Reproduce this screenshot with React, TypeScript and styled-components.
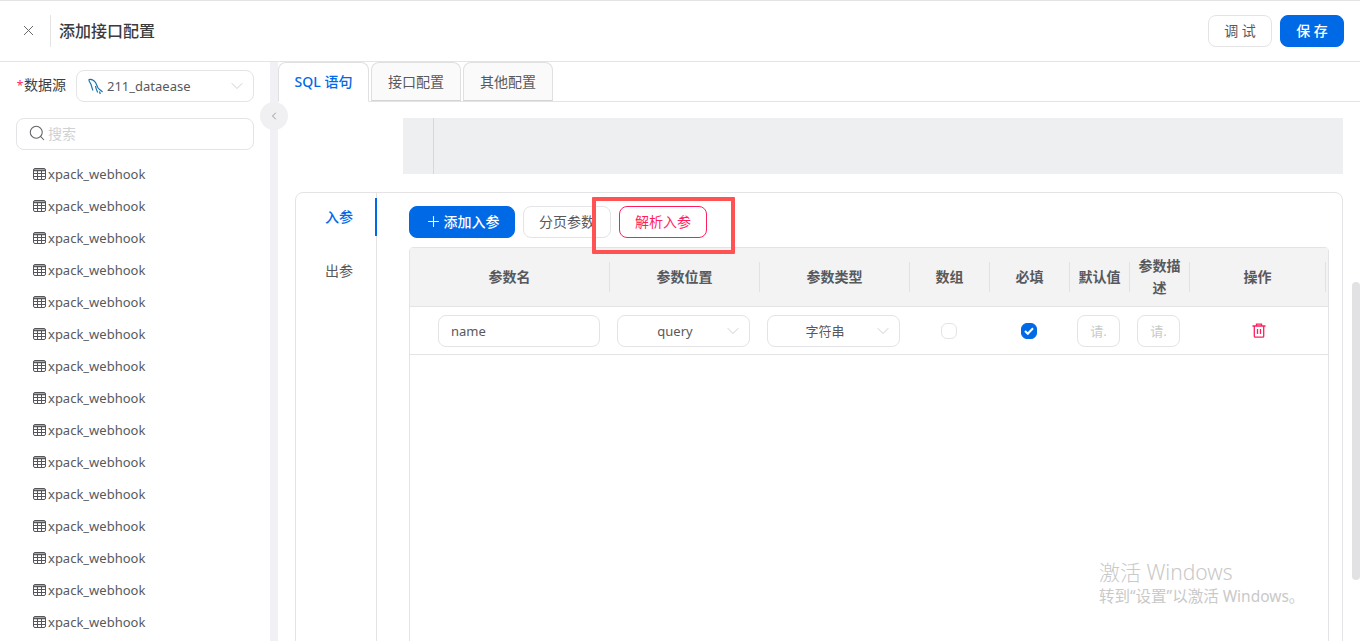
import React from "react";
import styled, { createGlobalStyle } from "styled-components";
import { ChevronDown, ChevronLeft, Plus, Search, X } from "lucide-react";

const blue = "#0069e6";
const pink = "#ff1f5f";
const line = "#e4e4e6";
const textColor = "#58595c";

const tables = Array.from({ length: 15 }, (_, i) => ({ id: i, name: "xpack_webhook" }));

const columns = ["参数名", "参数位置", "参数类型", "数组", "必填", "默认值", "参数描述", "操作"];

const GlobalStyle = createGlobalStyle`
  html, body {
    margin: 0;
    padding: 0;
    background: #fff;
    overflow: hidden;
  }
  * {
    box-sizing: border-box;
  }
  body {
    font-family: "Noto Sans", "Noto Sans CJK SC", sans-serif;
    font-size: 14px;
    color: ${textColor};
  }
`;

function TableIcon() {
  return (
    <svg width="14" height="14" viewBox="0 0 14 14" fill="none" stroke="#55565a">
      <rect x="0.5" y="1.500" width="12" height="11" rx="1.500" />
      <path d="M.5 3h12M.5 3.600h12" strokeWidth="1.200" />
      <path d="M.5 6.500h12M.5 9.500h12M4.500 4v8.500M8.500 4v8.500" />
    </svg>
  );
}

function DolphinIcon() {
  return (
    <svg width="16" height="17" viewBox="0 0 16 17" fill="none" stroke="#1a72ad" strokeWidth="1.200">
      <path d="M.8 1.500c3-.8 5 .4 6.700 3 1 1.800 1.600 4 2.600 5.500 1 1.300 2.600 2.400 4.400 4" />
      <path d="M.8 1.500c.3 2 1.400 3.300 2.200 5 .7 1.700.8 3.500 2 6" />
      <path d="M7.500 8c.3 2 .9 3.800 2.200 6.500" />
      <path d="M11.500 13.500l.8 2.500" />
    </svg>
  );
}

function TrashIcon() {
  return (
    <svg width="14" height="15" viewBox="0 0 14 15" fill="none" stroke={pink} strokeWidth="1.300">
      <path d="M.5 3h13M4.500 3V1.200h5V3" />
      <path d="M2.300 3v10.300c0 .5.400.9.900.9h7.600c.5 0 .9-.4.900-.9V3" />
      <path d="M5.500 6v5M8.500 6v5" />
    </svg>
  );
}

export default function App() {
  return (
    <Page>
      <GlobalStyle />
      <Header>
        <CloseButton>
          <X size={17} strokeWidth={1.4} />
        </CloseButton>
        <Title>添加接口配置</Title>
        <HeaderActions>
          <Button>调 试</Button>
          <Button $primary>保 存</Button>
        </HeaderActions>
      </Header>

      <Body>
        <Sidebar>
          <SourceRow>
            <SourceLabel>
              <Required>*</Required>数据源
            </SourceLabel>
            <SourceSelect>
              <DolphinIcon />
              <span>211_dataease</span>
              <SourceArrow size={20} strokeWidth={1} />
            </SourceSelect>
          </SourceRow>
          <SearchBox>
            <Search size={18} strokeWidth={1.4} color="#606266" />
            <span>搜索</span>
          </SearchBox>
          <TableList>
            {tables.map((t) => (
              <TableRow key={t.id}>
                <TableIcon />
                {t.name}
              </TableRow>
            ))}
          </TableList>
        </Sidebar>

        <Splitter>
          <CollapseButton>
            <ChevronLeft size={12} strokeWidth={1.5} />
          </CollapseButton>
        </Splitter>

        <Main>
          <TabBar>
            <Tab $active>SQL 语句</Tab>
            <Tab>接口配置</Tab>
            <Tab>其他配置</Tab>
          </TabBar>

          <Editor>
            <Gutter />
          </Editor>

          <ParamCard>
            <SideTabs>
              <SideTab $active>入参</SideTab>
              <SideTab>出参</SideTab>
            </SideTabs>
            <ParamContent>
              <Toolbar>
                <ToolButton $variant="primary">
                  <Plus size={17} strokeWidth={1.5} />
                  添加入参
                </ToolButton>
                <ToolButton>分页参数</ToolButton>
                <ToolButton $variant="danger">解析入参</ToolButton>
              </Toolbar>
              <ParamTable>
                <HeadRow>
                  {columns.map((c) => (
                    <HeadCell key={c}>
                      <span>{c}</span>
                    </HeadCell>
                  ))}
                </HeadRow>
                <DataRow>
                  <Cell>
                    <NameInput>name</NameInput>
                  </Cell>
                  <Cell>
                    <Select>
                      <span>query</span>
                      <FieldArrow size={20} strokeWidth={1} />
                    </Select>
                  </Cell>
                  <Cell>
                    <Select>
                      <span>字符串</span>
                      <FieldArrow size={20} strokeWidth={1} />
                    </Select>
                  </Cell>
                  <CheckCell>
                    <Checkbox />
                  </CheckCell>
                  <CheckCell>
                    <Checkbox $checked>
                      <svg width="10" height="8" viewBox="0 0 10 8" fill="none" stroke="#fff" strokeWidth="2">
                        <path d="M1 4l2.800 2.800L9 1.200" />
                      </svg>
                    </Checkbox>
                  </CheckCell>
                  <Cell>
                    <SmallInput>请.</SmallInput>
                  </Cell>
                  <Cell>
                    <SmallInput>请.</SmallInput>
                  </Cell>
                  <ActionCell>
                    <TrashIcon />
                  </ActionCell>
                </DataRow>
              </ParamTable>
            </ParamContent>
          </ParamCard>
        </Main>
      </Body>

      <Annotation />
      <ScrollThumb />
      <Watermark>
        <strong>激活 Windows</strong>
        <span>转到“设置”以激活 Windows。</span>
      </Watermark>
    </Page>
  );
}

const Page = styled.div`
  position: relative;
  display: flex;
  flex-direction: column;
  height: 641px;
  overflow: hidden;
  border-top: 1px solid ${line};
`;

const Header = styled.header`
  display: flex;
  align-items: center;
  flex-shrink: 0;
  height: 61px;
  padding: 0 16px 1px 0;
  border-bottom: 1px solid ${line};
`;

const CloseButton = styled.div`
  display: flex;
  align-items: center;
  justify-content: center;
  width: 51px;
  height: 32px;
  padding-left: 6px;
  border-right: 1px solid ${line};
  color: #66676a;
`;

const Title = styled.div`
  margin-left: 8px;
  padding-bottom: 2px;
  color: #3a3b3e;
  font-size: 16px;
  font-weight: 500;
`;

const HeaderActions = styled.div`
  display: flex;
  gap: 8px;
  margin-left: auto;
`;

const Button = styled.button<{ $primary?: boolean }>`
  width: 64px;
  height: 32px;
  padding: 0 0 1px;
  border: 1px solid ${(p) => (p.$primary ? blue : line)};
  border-radius: 8px;
  background: ${(p) => (p.$primary ? blue : "#fff")};
  color: ${(p) => (p.$primary ? "#fff" : textColor)};
  font-family: inherit;
  font-size: 14px;
  font-weight: ${(p) => (p.$primary ? 500 : 400)};
`;

const Body = styled.div`
  display: flex;
  flex: 1;
  min-height: 0;
`;

const Sidebar = styled.aside`
  flex-shrink: 0;
  width: 270px;
  padding: 8px 16px 0;
`;

const SourceRow = styled.div`
  display: flex;
  align-items: center;
  height: 32px;
`;

const SourceLabel = styled.div`
  width: 60px;
  padding-bottom: 4px;
  color: #3f4043;
  white-space: nowrap;
`;

const Required = styled.span`
  display: inline-block;
  width: 8px;
  color: ${pink};
  font-size: 12px;
  text-align: center;
`;

const SourceSelect = styled.div`
  display: flex;
  align-items: center;
  gap: 3px;
  width: 178px;
  height: 32px;
  padding: 0 11px;
  border: 1px solid ${line};
  border-radius: 8px;
  color: ${textColor};
  font-size: 13px;
`;

const SourceArrow = styled(ChevronDown)`
  margin-left: auto;
  margin-right: -5px;
  color: #c4c5c8;
`;

const FieldArrow = styled(ChevronDown)`
  position: absolute;
  right: 6px;
  color: #c4c5c8;
`;

const SearchBox = styled.div`
  display: flex;
  align-items: center;
  gap: 2px;
  height: 32px;
  margin-top: 16px;
  padding: 0 0 2px 11px;
  border: 1px solid ${line};
  border-radius: 8px;
  color: #d0d1d3;
`;

const TableList = styled.div`
  margin-top: 8px;
`;

const TableRow = styled.div`
  display: flex;
  align-items: center;
  gap: 1px;
  height: 32px;
  padding: 0 0 1px 17px;
  color: ${textColor};
  font-size: 13px;
`;

const Splitter = styled.div`
  position: relative;
  flex-shrink: 0;
  width: 8px;
  background: #f0f0f5;
`;

const CollapseButton = styled.div`
  position: absolute;
  top: 40px;
  left: -10px;
  display: flex;
  align-items: center;
  justify-content: center;
  width: 28px;
  height: 28px;
  border-radius: 50%;
  background: #f0f0f2;
  color: #7a7b7e;
`;

const Main = styled.main`
  flex: 1;
  min-width: 0;
`;

const TabBar = styled.div`
  display: flex;
  gap: 2px;
  height: 40px;
  border-bottom: 1px solid ${line};
`;

const Tab = styled.div<{ $active?: boolean }>`
  display: flex;
  align-items: center;
  justify-content: center;
  width: ${(p) => (p.$active ? 91 : 90)}px;
  height: ${(p) => (p.$active ? 40 : 39)}px;
  padding-bottom: 2px;
  border: 1px solid #e0e0e2;
  border-bottom-color: ${(p) => (p.$active ? "#fff" : "#d4d4d6")};
  border-radius: 8px 8px 0 0;
  background: ${(p) => (p.$active ? "#fff" : "#fafafa")};
  color: ${(p) => (p.$active ? blue : textColor)};
  font-weight: ${(p) => (p.$active ? 500 : 400)};
`;

const Editor = styled.div`
  height: 56px;
  margin: 16px 17px 0 125px;
  padding-left: 30px;
  background: #eeeff1;
`;

const Gutter = styled.div`
  height: 100%;
  border-left: 1px solid #d8d8da;
`;

const ParamCard = styled.section`
  display: flex;
  height: 500px;
  margin: 18px 17px 0;
  border: 1px solid ${line};
  border-radius: 8px;
`;

const SideTabs = styled.div`
  flex-shrink: 0;
  width: 81px;
  padding-top: 5px;
  border-right: 1px solid ${line};
`;

const SideTab = styled.div<{ $active?: boolean }>`
  display: flex;
  align-items: center;
  justify-content: center;
  height: 38px;
  margin-right: -1px;
  margin-bottom: 16px;
  padding: 0 0 2px 7px;
  border-right: 2px solid ${(p) => (p.$active ? blue : "transparent")};
  color: ${(p) => (p.$active ? blue : textColor)};
  font-weight: ${(p) => (p.$active ? 500 : 400)};
`;

const ParamContent = styled.div`
  display: flex;
  flex: 1;
  flex-direction: column;
  min-width: 0;
  padding: 13px 13px 0 32px;
`;

const Toolbar = styled.div`
  display: flex;
  gap: 8px;
  height: 32px;
`;

const ToolButton = styled.div<{ $variant?: "primary" | "danger" }>`
  display: flex;
  align-items: center;
  justify-content: center;
  gap: 2px;
  width: ${(p) => (p.$variant === "primary" ? 106 : 88)}px;
  padding-bottom: 2px;
  border: 1px solid ${(p) => (p.$variant === "primary" ? blue : p.$variant === "danger" ? pink : line)};
  border-radius: 8px;
  background: ${(p) => (p.$variant === "primary" ? blue : "#fff")};
  color: ${(p) => (p.$variant === "primary" ? "#fff" : p.$variant === "danger" ? pink : textColor)};
  font-weight: ${(p) => (p.$variant === "primary" ? 500 : 400)};
`;

const ParamTable = styled.div`
  flex: 1;
  margin-top: 9px;
  border: 1px solid ${line};
  border-radius: 4px 4px 0 0;
`;

const gridColumns = "200px 150px 150px 80px 80px 60px 60px 136px";

const HeadRow = styled.div`
  display: grid;
  grid-template-columns: ${gridColumns};
  align-items: center;
  height: 59px;
  border-bottom: 1px solid ${line};
  background: #f3f3f4;
`;

const HeadCell = styled.div`
  display: flex;
  align-items: center;
  justify-content: center;
  height: 30px;
  padding: 0 8px;
  border-right: 1px solid #e2e2e4;
  color: ${textColor};
  font-weight: 700;
  line-height: 22px;
  text-align: center;
`;

const DataRow = styled.div`
  display: grid;
  grid-template-columns: ${gridColumns};
  align-items: center;
  height: 48px;
  border-bottom: 1px solid ${line};
`;

const Cell = styled.div`
  padding: 0 10px 0 7px;
`;

const CheckCell = styled(Cell)`
  display: flex;
  justify-content: center;
`;

const ActionCell = styled.div`
  display: flex;
  justify-content: center;
  padding-left: 1px;
`;

const Field = styled.div`
  display: flex;
  align-items: center;
  height: 32px;
  border: 1px solid ${line};
  border-radius: 8px;
  color: ${textColor};
  font-size: 13px;
`;

const NameInput = styled(Field)`
  margin-left: 21px;
  padding-left: 12px;
`;

const Select = styled(Field)`
  position: relative;
  justify-content: center;
  padding-right: 17px;
`;

const SmallInput = styled(Field)`
  justify-content: center;
  color: #c8c9cb;
`;

const Checkbox = styled.div<{ $checked?: boolean }>`
  display: flex;
  align-items: center;
  justify-content: center;
  width: 16px;
  height: 16px;
  border: 1px solid ${(p) => (p.$checked ? blue : line)};
  border-radius: 6px;
  background: ${(p) => (p.$checked ? blue : "#fff")};
`;

const Annotation = styled.div`
  position: absolute;
  top: 196px;
  left: 592px;
  width: 143px;
  height: 57px;
  border: 4px solid #ff5252;
  border-radius: 1px;
  pointer-events: none;
`;

const ScrollThumb = styled.div`
  position: absolute;
  top: 281px;
  right: 0;
  width: 8px;
  height: 298px;
  border-radius: 4px;
  background: #e2e2e4;
`;

const Watermark = styled.div`
  position: absolute;
  top: 557px;
  left: 1099px;
  display: flex;
  flex-direction: column;
  color: #c9c9c9;
  font-size: 15.5px;
  line-height: 20px;
  white-space: nowrap;

  strong {
    font-size: 21px;
    font-weight: 300;
    line-height: 28px;
  }
`;
